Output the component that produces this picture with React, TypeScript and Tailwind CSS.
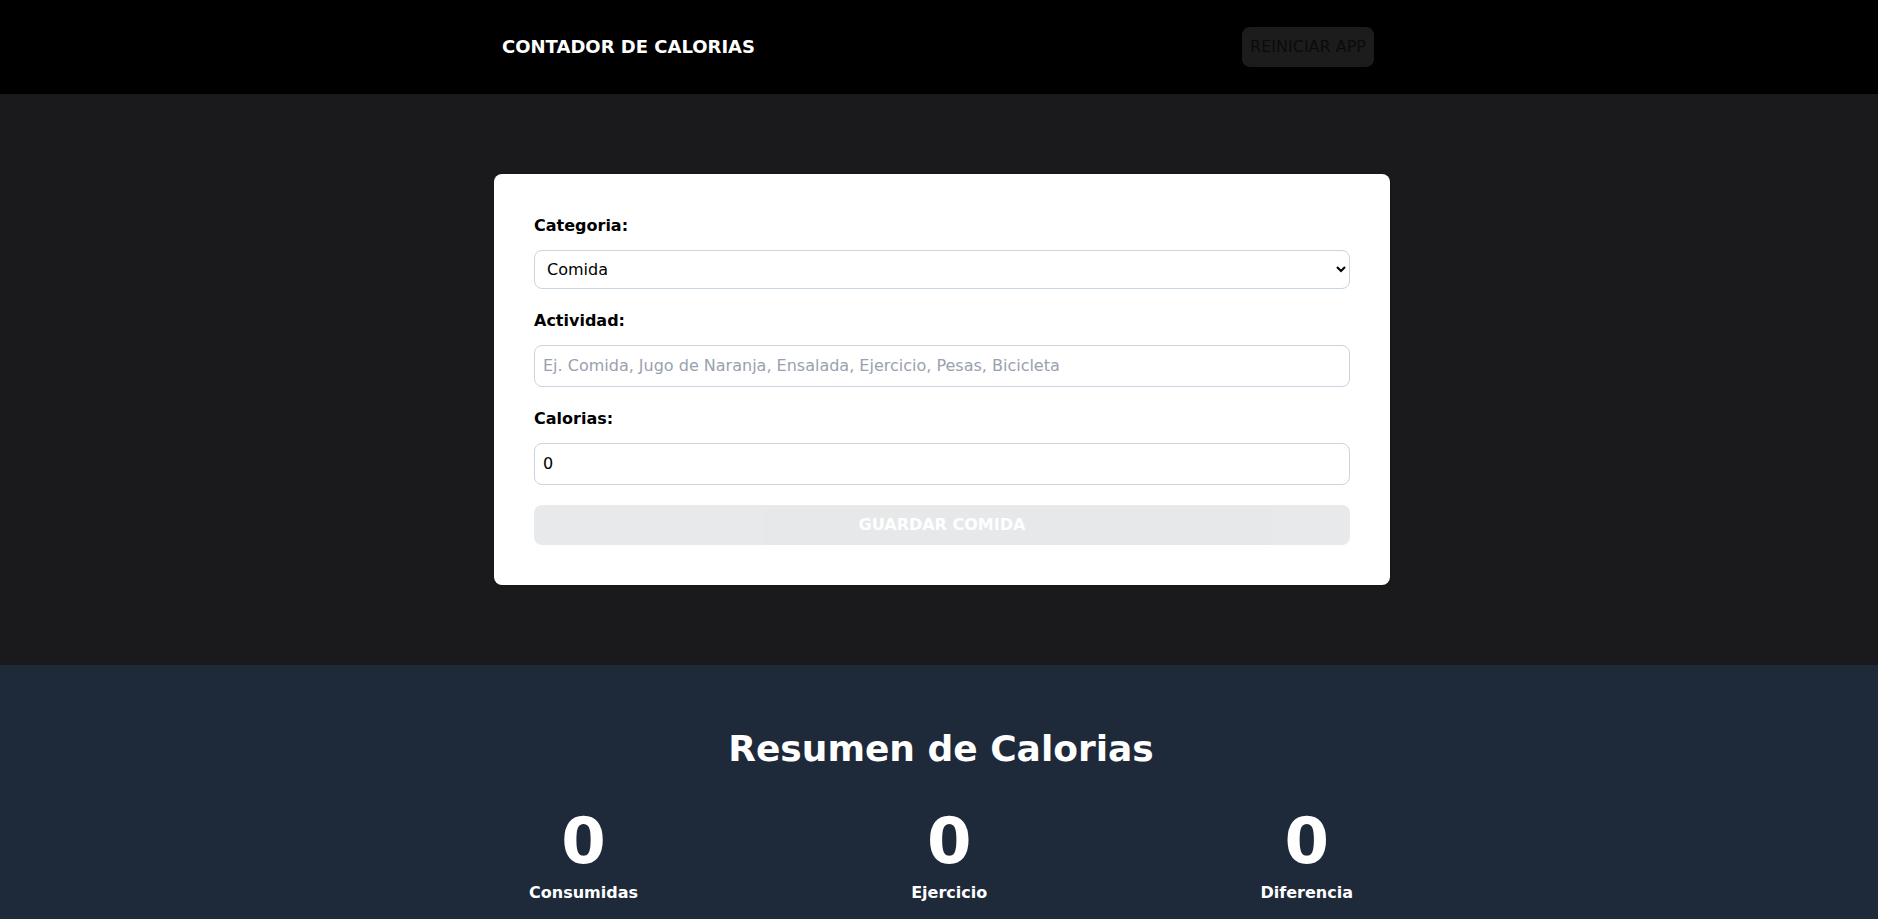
import { useState } from "react";

const categories = [
  { id: 1, name: "Comida" },
  { id: 2, name: "Ejercicio" },
];

function CalorieDisplay({ calories, text }: { calories: number; text: string }) {
  return (
    <p className="text-white font-bold text-center flex flex-col">
      <span className="text-[64px] leading-none font-black">{calories}</span>
      <span className="mt-2 text-base">{text}</span>
    </p>
  );
}

export default function App() {
  const [category, setCategory] = useState(1);
  const [name, setName] = useState("");
  const [calories, setCalories] = useState(0);

  const isValid = name.trim() !== "" && calories > 0;

  return (
    <div className="min-h-screen font-['DejaVu_Sans',sans-serif]">
      <header className="bg-black py-[27px]">
        <div className="max-w-4xl mx-auto pl-[11px] pr-[13px] flex justify-between items-center">
          <h1 className="text-lg font-bold text-white uppercase">Contador de Calorias</h1>
          <button
            className="bg-[#1c1c1c] text-[#0b0b0b] px-2 py-2 rounded-lg uppercase text-base"
            onClick={() => {
              setName("");
              setCalories(0);
            }}
          >
            Reiniciar App
          </button>
        </div>
      </header>

      <section className="bg-[#1a1a1c] py-20 pl-[26px] pr-5">
        <div className="max-w-4xl mx-auto">
          <form className="space-y-5 bg-white shadow p-10 rounded-lg" onSubmit={(e) => e.preventDefault()}>
            <div className="grid grid-cols-1 gap-3">
              <label htmlFor="category" className="font-bold text-black">
                Categoria:
              </label>
              <select
                id="category"
                className="border border-slate-300 p-2 rounded-lg w-full bg-white text-black"
                value={category}
                onChange={(e) => setCategory(+e.target.value)}
              >
                {categories.map((c) => (
                  <option key={c.id} value={c.id}>
                    {c.name}
                  </option>
                ))}
              </select>
            </div>

            <div className="grid grid-cols-1 gap-3">
              <label htmlFor="name" className="font-bold text-black">
                Actividad:
              </label>
              <input
                id="name"
                type="text"
                className="border border-slate-300 p-2 rounded-lg text-black placeholder:text-gray-400"
                placeholder="Ej. Comida, Jugo de Naranja, Ensalada, Ejercicio, Pesas, Bicicleta"
                value={name}
                onChange={(e) => setName(e.target.value)}
              />
            </div>

            <div className="grid grid-cols-1 gap-3">
              <label htmlFor="calories" className="font-bold text-black">
                Calorias:
              </label>
              <input
                id="calories"
                type="number"
                className="border border-slate-300 p-2 rounded-lg text-black"
                placeholder="Calorias. ej. 300 o 500"
                value={calories}
                onChange={(e) => setCalories(+e.target.value)}
              />
            </div>

            <button
              type="submit"
              disabled={!isValid}
              className="bg-gray-800 hover:bg-gray-900 w-full py-2 font-bold uppercase text-white rounded-lg cursor-pointer disabled:opacity-10"
            >
              {category === 1 ? "Guardar Comida" : "Guardar Ejercicio"}
            </button>
          </form>
        </div>
      </section>

      <section className="bg-gray-800 pt-16 pb-10 pl-1">
        <div className="max-w-[824px] mx-auto">
          <h2 className="text-4xl font-bold text-white text-center">Resumen de Calorias</h2>
          <div className="flex justify-between mt-10">
            <CalorieDisplay calories={0} text="Consumidas" />
            <CalorieDisplay calories={0} text="Ejercicio" />
            <CalorieDisplay calories={0} text="Diferencia" />
          </div>
        </div>
      </section>
    </div>
  );
}
